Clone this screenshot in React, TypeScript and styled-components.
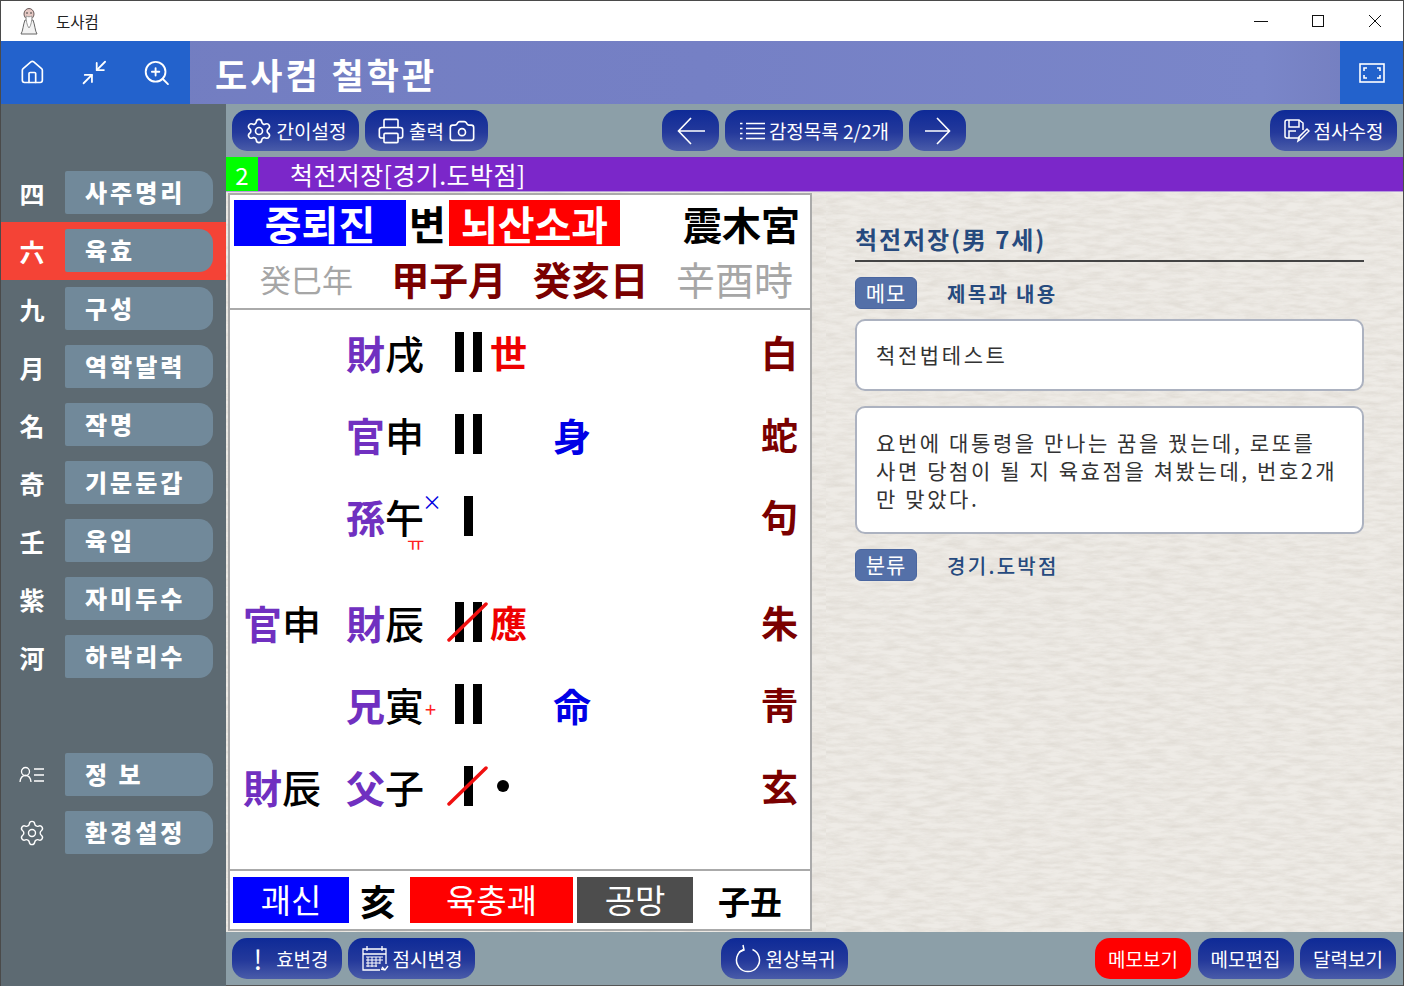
import * as React from 'react';
import styled, { createGlobalStyle } from 'styled-components';
import { House, Minimize2, ZoomIn, Settings, Printer, Camera } from 'lucide-react';

const FONT = `"Noto Sans CJK KR", "Noto Sans", sans-serif`;

const paperSvg = encodeURIComponent(
    `<svg xmlns='http://www.w3.org/2000/svg' width='600' height='760'><filter id='p'><feTurbulence type='fractalNoise' baseFrequency='0.05 0.22' numOctaves='4' seed='7'/><feColorMatrix values='0 0 0 0 0.62 0 0 0 0 0.58 0 0 0 0 0.52 0.75 0 0 0 -0.24'/></filter><rect width='600' height='760' filter='url(#p)'/></svg>`
);

const GlobalStyle = createGlobalStyle`
    * { box-sizing: border-box; }
    html, body { margin: 0; padding: 0; background: #fff; }
    body { font-family: ${FONT}; }
`;

const sideItems = [
    { mark: '四', label: '사주명리' },
    { mark: '六', label: '육효', active: true },
    { mark: '九', label: '구성' },
    { mark: '月', label: '역학달력' },
    { mark: '名', label: '작명' },
    { mark: '奇', label: '기문둔갑' },
    { mark: '壬', label: '육임' },
    { mark: '紫', label: '자미두수' },
    { mark: '河', label: '하락리수' },
];

type Yao = {
    fu?: [string, string];
    kin: string;
    branch: string;
    bars: 1 | 2;
    cut?: boolean;
    sup?: string;
    sub?: string;
    side?: string;
    seal?: string;
    beast: string;
    gap?: boolean;
};

const yaos: Yao[] = [
    { kin: '財', branch: '戌', bars: 2, seal: '世', beast: '白' },
    { kin: '官', branch: '申', bars: 2, side: '身', beast: '蛇' },
    { kin: '孫', branch: '午', bars: 1, sup: '×', sub: 'ㅠ', beast: '句' },
    { fu: ['官', '申'], kin: '財', branch: '辰', bars: 2, cut: true, seal: '應', beast: '朱', gap: true },
    { kin: '兄', branch: '寅', bars: 2, sup: '+', side: '命', beast: '靑' },
    { fu: ['財', '辰'], kin: '父', branch: '子', bars: 1, cut: true, seal: '•', beast: '玄' },
];

export default function App() {
    return (
        <Window>
            <GlobalStyle />
            <TitleBar>
                <SageIcon />
                <TitleText>도사컴</TitleText>
                <WinControls>
                    <WinButton>
                        <svg width="14" height="14" viewBox="0 0 14 14"><path d="M0 7.500h14" stroke="#111" /></svg>
                    </WinButton>
                    <WinButton>
                        <svg width="14" height="14" viewBox="0 0 14 14" fill="none"><rect x="1.500" y="1.500" width="11" height="11" stroke="#111" /></svg>
                    </WinButton>
                    <WinButton>
                        <svg width="14" height="14" viewBox="0 0 14 14" fill="none"><path d="M1 1l12 12M13 1L1 13" stroke="#111" /></svg>
                    </WinButton>
                </WinControls>
            </TitleBar>
            <Header>
                <HeaderTools>
                    <House size={27} strokeWidth={1.5} />
                    <Minimize2 size={29} strokeWidth={1.5} />
                    <ZoomIn size={30} strokeWidth={1.5} />
                </HeaderTools>
                <HeaderTitle>도사컴 철학관</HeaderTitle>
                <FullButton>
                    <svg width="26" height="20" viewBox="0 0 26 20" fill="none" stroke="#fff">
                        <rect x="1" y="1" width="24" height="18" strokeWidth="1.6" />
                        <path d="M8 5H5v3M18 5h3v3M8 15H5v-3M18 15h3v-3" strokeWidth="1.6" />
                    </svg>
                </FullButton>
            </Header>
            <Body>
                <Sidebar>
                    {sideItems.map(item => (
                        <SideRow key={item.label} $active={item.active}>
                            <SideMark>{item.mark}</SideMark>
                            <SideButton>{item.label}</SideButton>
                        </SideRow>
                    ))}
                    <SideRow $gap>
                        <SideMark>
                            <svg width="26" height="18" viewBox="0 0 26 18" fill="none" stroke="#fff" strokeWidth="1.3">
                                <circle cx="6.500" cy="5.500" r="4" />
                                <path d="M1 16c.4-4 2.600-6.500 5.500-6.500S11.600 12 12 16M15 3h10M15 9h10M15 15h10" />
                            </svg>
                        </SideMark>
                        <SideButton>정 보</SideButton>
                    </SideRow>
                    <SideRow>
                        <SideMark><Settings size={28} strokeWidth={1.2} /></SideMark>
                        <SideButton>환경설정</SideButton>
                    </SideRow>
                </Sidebar>
                <Main>
                    <Toolbar>
                        <ToolGroup>
                            <ToolButton $w={127}><Settings size={28} strokeWidth={1.4} />간이설정</ToolButton>
                            <ToolButton $w={123}>
                                <Printer size={28} strokeWidth={1.4} />출력
                                <Camera size={28} strokeWidth={1.4} />
                            </ToolButton>
                        </ToolGroup>
                        <ToolGroup>
                            <ToolButton $w={57}>
                                <svg width="28" height="28" viewBox="0 0 28 28" fill="none" stroke="#fff" strokeWidth="1.6">
                                    <path d="M28 14H2M14 1L1.500 14 14 27" />
                                </svg>
                            </ToolButton>
                            <ToolButton $w={178}>
                                <svg width="26" height="18" viewBox="0 0 26 18" stroke="#fff" fill="none" strokeWidth="1.5">
                                    <path d="M7 1.500h19M7 6.500h19M7 11.500h19M7 16.500h19M1 1.500h2.500M1 6.500h2.500M1 11.500h2.500M1 16.500h2.500" />
                                </svg>
                                감정목록 2/2개
                            </ToolButton>
                            <ToolButton $w={57}>
                                <svg width="26" height="28" viewBox="0 0 26 28" fill="none" stroke="#fff" strokeWidth="1.6">
                                    <path d="M0 14h24M12 1l12.500 13L12 27" />
                                </svg>
                            </ToolButton>
                        </ToolGroup>
                        <RightGroup>
                            <ToolButton $w={127}>
                                <svg width="26" height="24" viewBox="0 0 26 24" fill="none" stroke="#fff" strokeWidth="1.5">
                                    <path d="M16 19H3a2 2 0 0 1-2-2V3a2 2 0 0 1 2-2h12l4 3v7" />
                                    <path d="M5 1v7h10V1M5 19v-7h7" />
                                    <path d="M14 22l1-4 8-8 2 2-8 8z" />
                                </svg>
                                점사수정
                            </ToolButton>
                        </RightGroup>
                    </Toolbar>
                    <CaseBar>
                        <CaseNo>2</CaseNo>
                        <CaseName>척전저장[경기.도박점]</CaseName>
                    </CaseBar>
                    <Content>
                        <Board>
                            <BoardHead>
                                <GuaRow>
                                    <GuaBox $bg="#0000ff" $w={172}>중뢰진</GuaBox>
                                    <GuaWord>변</GuaWord>
                                    <GuaBox $bg="#ff0000" $w={171}>뇌산소과</GuaBox>
                                    <Palace>震木宮</Palace>
                                </GuaRow>
                                <DateRow>
                                    <DateCell $size={31}>癸巳年</DateCell>
                                    <DateCell $strong>甲子月</DateCell>
                                    <DateCell $strong>癸亥日</DateCell>
                                    <DateCell>辛酉時</DateCell>
                                </DateRow>
                            </BoardHead>
                            <YaoList>
                                {yaos.map((y, i) => (
                                    <YaoRow key={i} $gap={y.gap}>
                                        <Pair>
                                            {y.fu && <><Kin>{y.fu[0]}</Kin><Branch>{y.fu[1]}</Branch></>}
                                        </Pair>
                                        <Pair>
                                            <Kin>{y.kin}</Kin>
                                            <Branch>{y.branch}</Branch>
                                            {y.sup === '×' && <SupMark>×</SupMark>}
                                            {y.sup === '+' && <PlusMark>+</PlusMark>}
                                            {y.sub && <SubMark>{y.sub}</SubMark>}
                                        </Pair>
                                        <Bars $n={y.bars}>
                                            <Bar />
                                            {y.bars === 2 && <Bar />}
                                            {y.cut && (
                                                <CutLine width="42" height="40" viewBox="0 0 42 40">
                                                    <path d="M2 38L39 2" stroke="#f01010" strokeWidth="3.500" strokeLinecap="round" />
                                                </CutLine>
                                            )}
                                        </Bars>
                                        {y.seal === '•' ? <Dot /> : <Seal>{y.seal}</Seal>}
                                        <BodyMark>{y.side}</BodyMark>
                                        <Beast>{y.beast}</Beast>
                                    </YaoRow>
                                ))}
                            </YaoList>
                            <BoardFoot>
                                <FootBox $bg="#0000ff" $w={116}>괘신</FootBox>
                                <FootWord $left={11} $size={36}>亥</FootWord>
                                <FootBox $bg="#ff0000" $w={163} $left={14}>육충괘</FootBox>
                                <FootBox $bg="#4d4d4d" $w={116} $left={4}>공망</FootBox>
                                <FootWord $left={25} $size={32}>子丑</FootWord>
                            </BoardFoot>
                        </Board>
                        <MemoPanel>
                            <MemoTitle>척전저장(男 7세)</MemoTitle>
                            <TagRow $top={15}>
                                <Tag>메모</Tag>
                                <TagLabel $bold>제목과 내용</TagLabel>
                            </TagRow>
                            <MemoBox $top={10} $h={72} $pad={19}>척전법테스트</MemoBox>
                            <MemoBox $top={15} $h={128} $pad={20}>
                                요번에 대통령을 만나는 꿈을 꿨는데, 로또를<br />
                                사면 당첨이 될 지 육효점을 쳐봤는데, 번호2개<br />
                                만 맞았다.
                            </MemoBox>
                            <TagRow $top={15}>
                                <Tag>분류</Tag>
                                <TagLabel>경기.도박점</TagLabel>
                            </TagRow>
                        </MemoPanel>
                    </Content>
                    <BottomBar>
                        <ToolGroup>
                            <ToolButton $w={110} $inset={8}><Bang>!</Bang><SmallText>효변경</SmallText></ToolButton>
                            <ToolButton $w={127}>
                                <svg width="28" height="28" viewBox="0 0 28 28" fill="none" stroke="#fff" strokeWidth="1.3">
                                    <path d="M19 25H2V4h23v15" />
                                    <path d="M6 1v5M21 1v5M2 9h23" />
                                    <path d="M5 12h17M5 15h17M5 18h14M5 21h11M7 12v10M11 12v10M15 12v10M19 12v7" strokeWidth="1" />
                                    <path d="M27 21l-3 4-4-1M24 25l-3-3" />
                                </svg>
                                점시변경
                            </ToolButton>
                        </ToolGroup>
                        <CenterGroup>
                            <ToolButton $w={127}>
                                <svg width="28" height="30" viewBox="0 0 28 30" fill="none" stroke="#fff" strokeWidth="1.5">
                                    <path d="M18.500 5.500a11.500 11.500 0 1 1-9 0" />
                                    <path d="M9 1l1 5-5 2" />
                                </svg>
                                원상복귀
                            </ToolButton>
                        </CenterGroup>
                        <MemoGroup>
                            <ToolButton $w={96} $red>메모보기</ToolButton>
                            <ToolButton $w={96}>메모편집</ToolButton>
                            <ToolButton $w={96}>달력보기</ToolButton>
                        </MemoGroup>
                    </BottomBar>
                </Main>
            </Body>
        </Window>
    );
}

function SageIcon() {
    return (
        <SageSvg width="18" height="27" viewBox="0 0 18 27" fill="none">
            <ellipse cx="9" cy="6" rx="5" ry="5.500" fill="#e6c9c4" stroke="#6a5a5a" />
            <path d="M5 12C3 17 3 23 1 26h16c-2-3-2-9-4-14z" fill="#f2f2f2" stroke="#666" />
            <path d="M6 8c0 4 1 10 3 12 2-2 3-8 3-12-2 1-4 1-6 0z" fill="#fff" stroke="#999" />
            <path d="M6 5h2M10 5h2" stroke="#444" />
        </SageSvg>
    );
}

const Window = styled.div`
    width: 1404px;
    height: 986px;
    overflow: hidden;
    display: flex;
    flex-direction: column;
    border: 1px solid #4a4a4a;
    border-bottom: 0;
    font-family: ${FONT};
`;

const TitleBar = styled.div`
    height: 40px;
    background: #fff;
    display: flex;
    align-items: center;
`;

const SageSvg = styled.svg`
    margin-left: 19px;
`;

const TitleText = styled.span`
    margin-left: 18px;
    font-size: 15.500px;
    color: #222;
`;

const WinControls = styled.div`
    margin-left: auto;
    display: flex;
`;

const WinButton = styled.div`
    width: 57px;
    height: 40px;
    display: flex;
    align-items: center;
    justify-content: center;
`;

const Header = styled.div`
    height: 63px;
    display: flex;
    background: linear-gradient(90deg, #727dc0 0%, #7580c5 50%, #7a86c9 90%, #717bbb 100%);
`;

const HeaderTools = styled.div`
    width: 189px;
    background: #2362cc;
    color: #fff;
    display: flex;
    align-items: center;
    gap: 34px;
    padding: 0 18px;
`;

const HeaderTitle = styled.div`
    margin-left: 25px;
    font-size: 35px;
    font-weight: 700;
    letter-spacing: 3px;
    color: #fff;
    line-height: 65px;
    white-space: nowrap;
`;

const FullButton = styled.div`
    margin-left: auto;
    width: 63px;
    background: #2362cc;
    display: flex;
    align-items: center;
    justify-content: center;
`;

const Body = styled.div`
    flex: 1;
    display: flex;
    min-height: 0;
`;

const Sidebar = styled.div`
    width: 225px;
    background: #5d6a72;
    padding-top: 60px;
    display: flex;
    flex-direction: column;
`;

const SideRow = styled.div<{ $active?: boolean; $gap?: boolean }>`
    height: 58px;
    padding: 7px 13px 8px 0;
    display: flex;
    background: ${p => (p.$active ? '#f44336' : 'transparent')};
    margin-top: ${p => (p.$gap ? '60px' : '0')};
`;

const SideMark = styled.div`
    width: 64px;
    padding-right: 2px;
    display: flex;
    align-items: center;
    justify-content: center;
    color: #fff;
    font-size: 25px;
    font-weight: 700;
`;

const SideButton = styled.div`
    flex: 1;
    background: #71899a;
    border-radius: 2px 14px 14px 2px;
    padding-left: 20px;
    color: #fff;
    font-size: 24px;
    font-weight: 900;
    letter-spacing: 3px;
    line-height: 41px;
`;

const Main = styled.div`
    flex: 1;
    min-width: 0;
    display: flex;
    flex-direction: column;
`;

const Toolbar = styled.div`
    height: 53px;
    padding: 6px 6px;
    background: #8c9fa8;
    display: grid;
    grid-template-columns: 430px auto 1fr;
`;

const ToolGroup = styled.div`
    display: flex;
    gap: 6px;
`;

const RightGroup = styled(ToolGroup)`
    justify-content: flex-end;
    margin-left: auto;
`;

const MemoGroup = styled(RightGroup)`
    gap: 6.500px;
    margin-right: 1px;
`;

const CenterGroup = styled(ToolGroup)`
    margin-left: 246px;
`;

const ToolButton = styled.div<{ $w: number; $red?: boolean; $inset?: number }>`
    width: ${p => p.$w}px;
    height: 41px;
    padding-left: ${p => p.$inset || 0}px;
    border-radius: 15px;
    background: ${p => (p.$red ? '#ff0000' : 'linear-gradient(180deg, #0e2a97 0%, #24399b 55%, #4a5ca9 100%)')};
    color: #fff;
    font-size: 19px;
    line-height: 39px;
    white-space: nowrap;
    display: flex;
    align-items: center;
    justify-content: center;
    gap: 4px;
`;

const Bang = styled.span`
    font-size: 27px;
    margin-right: 10px;
`;

const SmallText = styled.span`
    font-size: 19px;
`;

const CaseBar = styled.div`
    height: 34px;
    background: #7b27c9;
    display: flex;
    align-items: stretch;
`;

const CaseNo = styled.div`
    width: 32px;
    background: #00ff00;
    color: #fff;
    font-size: 24px;
    line-height: 36px;
    text-align: center;
`;

const CaseName = styled.div`
    margin-left: 32px;
    color: #fff;
    font-size: 25px;
    line-height: 35px;
    letter-spacing: 0.400px;
`;

const Content = styled.div`
    height: 741px;
    display: flex;
    background-color: #eeebe6;
    background-image: url("data:image/svg+xml,${paperSvg}");
    padding-top: 1px;
    border-top: 1px solid #b79bdc;
`;

const Board = styled.div`
    width: 584px;
    height: 738px;
    margin-left: 2px;
    background: #fff;
    border: 2px solid #aaa;
    display: flex;
    flex-direction: column;
`;

const BoardHead = styled.div`
    height: 115px;
    border-bottom: 2px solid #aaa;
    padding-top: 5px;
`;

const GuaRow = styled.div`
    display: flex;
    align-items: center;
    height: 46px;
    padding: 0 10px 0 4px;
`;

const GuaBox = styled.div<{ $bg: string; $w: number }>`
    width: ${p => p.$w}px;
    height: 46px;
    background: ${p => p.$bg};
    color: #fff;
    font-size: 40px;
    font-weight: 700;
    line-height: 46px;
    text-align: center;
    white-space: nowrap;
`;

const GuaWord = styled.div`
    width: 43px;
    text-align: center;
    font-size: 40px;
    font-weight: 700;
    color: #000;
`;

const Palace = styled.div`
    margin-left: auto;
    font-size: 39px;
    font-weight: 700;
    color: #000;
    white-space: nowrap;
`;

const DateRow = styled.div`
    display: grid;
    grid-template-columns: 131px 142px 143px 1fr;
    padding: 4px 0 0 30px;
    align-items: center;
    height: 60px;
`;

const DateCell = styled.div<{ $strong?: boolean; $size?: number }>`
    font-size: ${p => p.$size || (p.$strong ? 38.500 : 39)}px;
    font-weight: ${p => (p.$strong ? 700 : 400)};
    color: ${p => (p.$strong ? '#7a0000' : '#a6a6a6')};
    white-space: nowrap;
`;

const YaoList = styled.div`
    flex: 1;
    padding: 1px 12px 0 13px;
`;

const YaoRow = styled.div<{ $gap?: boolean }>`
    height: 82px;
    margin-top: ${p => (p.$gap ? '24px' : '0')};
    display: grid;
    grid-template-columns: 103px 109px 35px 63px 1fr 38px;
    align-items: center;
`;

const Pair = styled.div`
    position: relative;
    display: flex;
    font-size: 39px;
    line-height: 50px;
    height: 50px;
`;

const Kin = styled.span`
    font-weight: 700;
    color: #7030c0;
`;

const Branch = styled.span`
    font-weight: 500;
    color: #000;
`;

const SupMark = styled.span`
    position: absolute;
    left: 76px;
    top: -2px;
    font-size: 20px;
    line-height: 26px;
    color: #0000e0;
`;

const PlusMark = styled.span`
    position: absolute;
    left: 79px;
    top: 18px;
    font-size: 20px;
    line-height: 24px;
    color: #ff2020;
`;

const SubMark = styled.span`
    position: absolute;
    left: 61px;
    top: 45px;
    font-size: 19px;
    line-height: 14px;
    color: #ff2020;
`;

const Bars = styled.div<{ $n: number }>`
    position: relative;
    height: 40px;
    width: 27px;
    display: flex;
    justify-content: ${p => (p.$n === 2 ? 'space-between' : 'center')};
`;

const Bar = styled.div`
    width: 9px;
    height: 40px;
    background: #000;
`;

const CutLine = styled.svg`
    position: absolute;
    left: -8px;
    top: 0;
`;

const Seal = styled.div`
    font-size: 37px;
    font-weight: 700;
    color: #ee0000;
`;

const Dot = styled.div`
    width: 12px;
    height: 12px;
    margin-left: 7px;
    border-radius: 50%;
    background: #000;
`;

const BodyMark = styled.div`
    font-size: 38px;
    font-weight: 700;
    color: #0000e6;
`;

const Beast = styled.div`
    font-size: 37px;
    font-weight: 700;
    color: #7a0000;
    text-align: right;
    line-height: 50px;
`;

const BoardFoot = styled.div`
    height: 60px;
    border-top: 2px solid #aaa;
    padding: 6px 0 6px 3px;
    display: flex;
    align-items: center;
`;

const FootBox = styled.div<{ $bg: string; $w: number; $left?: number }>`
    width: ${p => p.$w}px;
    height: 46px;
    margin-left: ${p => p.$left || 0}px;
    background: ${p => p.$bg};
    color: #fff;
    font-size: 33px;
    line-height: 45px;
    text-align: center;
    white-space: nowrap;
`;

const FootWord = styled.div<{ $left: number; $size: number }>`
    margin-left: ${p => p.$left}px;
    font-size: ${p => p.$size}px;
    font-weight: 700;
    color: #000;
    white-space: nowrap;
`;

const MemoPanel = styled.div`
    flex: 1;
    padding: 24px 39px 0 43px;
`;

const MemoTitle = styled.div`
    height: 45px;
    border-bottom: 2px solid #444;
    color: #264a7e;
    font-size: 24px;
    font-weight: 700;
    line-height: 43px;
    letter-spacing: 1.900px;
    white-space: nowrap;
`;

const TagRow = styled.div<{ $top: number }>`
    margin-top: ${p => p.$top}px;
    display: flex;
    align-items: center;
    height: 32px;
`;

const Tag = styled.div`
    width: 62px;
    height: 32px;
    background: #5470a8;
    border: 1px solid #4a66a0;
    border-radius: 6px;
    color: #fff;
    font-size: 21px;
    line-height: 28px;
    letter-spacing: 1px;
    text-align: center;
`;

const TagLabel = styled.div<{ $bold?: boolean }>`
    margin-left: 30px;
    font-size: 20px;
    font-weight: ${p => (p.$bold ? 700 : 500)};
    letter-spacing: 2.300px;
    color: #264a7e;
`;

const MemoBox = styled.div<{ $top: number; $h: number; $pad: number }>`
    margin-top: ${p => p.$top}px;
    height: ${p => p.$h}px;
    padding: ${p => p.$pad}px 19px 0;
    background: #fff;
    border: 2px solid #acb2c0;
    border-radius: 10px;
    color: #333;
    font-size: 21px;
    line-height: 28px;
    letter-spacing: 2.600px;
    white-space: nowrap;
`;

const BottomBar = styled.div`
    flex: 1;
    padding: 6px;
    background: #8c9fa8;
    display: flex;
    border-bottom: 1px solid #555;
`;
